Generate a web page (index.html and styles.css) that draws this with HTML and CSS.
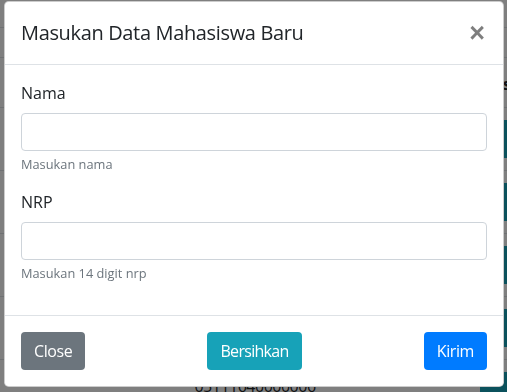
FILE: index.html
```html
<!DOCTYPE html>
<html>
	<head>
		<meta charset="utf-8">
		<title>Data Mahasiswa</title>
		<link rel="stylesheet" href="styles.css">
	</head>
	<body>
		<div class="page">
			<div class="row row-top"></div>
			<div class="row row-bar"></div>
			<div class="row row-head">
				<span class="cell cell-nrp"></span>
				<span class="cell cell-aksi">Aksi</span>
			</div>
			<div class="row"><span class="cell cell-nrp"></span><span class="cell cell-aksi"><span class="btn-bg"></span></span></div>
			<div class="row"><span class="cell cell-nrp"></span><span class="cell cell-aksi"><span class="btn-bg"></span></span></div>
			<div class="row"><span class="cell cell-nrp"></span><span class="cell cell-aksi"><span class="btn-bg"></span></span></div>
			<div class="row"><span class="cell cell-nrp"></span><span class="cell cell-aksi"><span class="btn-bg"></span></span></div>
			<div class="row row-last"><span class="cell cell-nrp">05111640000006</span><span class="cell cell-aksi"><span class="btn-bg"></span></span></div>
		</div>

		<div class="backdrop"></div>

		<div class="modal">
			<div class="modal-dialog">
				<div class="modal-header">
					<h5 class="modal-title">Masukan Data Mahasiswa Baru</h5>
					<button class="close" type="button">&times;</button>
				</div>
				<div class="modal-body">
					<div class="form-group">
						<label for="nama">Nama</label>
						<input class="form-control" id="nama" type="text">
						<small class="help">Masukan nama</small>
					</div>
					<div class="form-group">
						<label for="nrp">NRP</label>
						<input class="form-control" id="nrp" type="text">
						<small class="help">Masukan 14 digit nrp</small>
					</div>
				</div>
				<div class="modal-footer">
					<button class="btn btn-secondary" type="button">Close</button>
					<button class="btn btn-info" type="button">Bersihkan</button>
					<button class="btn btn-primary" type="button">Kirim</button>
				</div>
			</div>
		</div>
	</body>
</html>
```

FILE: styles.css
```css
* {
	margin: 0;
	padding: 0;
	box-sizing: border-box;
}

html, body {
	height: 100%;
	overflow: hidden;
}

body {
	font: 16px/1.5 "Open Sans", "Noto Sans", sans-serif;
	color: #212529;
	background: #fff;
}

/* table behind the modal */
.page {
	display: flex;
	flex-direction: column;
}

.row {
	display: flex;
	flex-shrink: 0;
	height: 63px;
	border-bottom: 1px solid #dee2e6;
}

.row-top {
	height: 28px;
}

.row-bar {
	height: 30px;
}

.row-head {
	height: 50px;
	font-weight: bold;
	align-items: flex-end;
	padding-bottom: 11px;
}

.cell {
	flex-shrink: 0;
}

.cell-nrp {
	width: 498px;
	text-align: center;
	padding-left: 14px;
	padding-top: 14px;
}

.row-head .cell-nrp {
	padding: 0;
}

.cell-aksi {
	padding-top: 12px;
}

.row-head .cell-aksi {
	margin-left: -16px;
	padding: 0;
}

.btn-bg {
	display: block;
	width: 60px;
	height: 38px;
	border-radius: 4px;
	background: #17a2b8;
}

.row-last .cell-nrp {
	width: 480px;
	padding-left: 30px;
	padding-right: 0;
	letter-spacing: -0.5px;
}

.backdrop {
	position: fixed;
	inset: 0;
	background: rgba(0, 0, 0, 0.5);
}

/* modal */
.modal {
	position: fixed;
	inset: 0;
	display: flex;
	align-items: flex-start;
	padding: 1px 0 0 4px;
}

.modal-dialog {
	width: 500px;
	background: #fff;
	border: 1px solid rgba(0, 0, 0, 0.2);
	border-radius: 4.8px;
	display: flex;
	flex-direction: column;
}

.modal-header {
	display: flex;
	align-items: flex-start;
	padding: 16px;
	border-bottom: 1px solid #dee2e6;
}

.modal-title {
	font-size: 20px;
	font-weight: 500;
	line-height: 30px;
	letter-spacing: -0.35px;
}

.close {
	margin: -16px -16px -16px auto;
	padding: 19px 18px 13px 16px;
	border: 0;
	background: transparent;
	font: bold 27px/24px "Liberation Sans", Arial, sans-serif;
	color: #000;
	opacity: 0.5;
}

.modal-body {
	padding: 16px;
}

.form-group {
	display: flex;
	flex-direction: column;
	margin-bottom: 16px;
}

.form-group label {
	margin-bottom: 8px;
}

.form-control {
	height: 38px;
	border: 1px solid #ced4da;
	border-radius: 4px;
	padding: 6px 12px;
	font: inherit;
}

.help {
	margin-top: 4px;
	font-size: 12.8px;
	line-height: 19.2px;
	color: #6c757d;
}

.modal-footer {
	display: flex;
	justify-content: space-between;
	align-items: center;
	padding: 12px;
	border-top: 1px solid #dee2e6;
}

.btn {
	margin: 4px;
	height: 38px;
	padding: 0 12px;
	border: 1px solid transparent;
	border-radius: 4px;
	color: #fff;
	font: 16px/36px "Open Sans", "Noto Sans", sans-serif;
	letter-spacing: -0.4px;
}

.btn-secondary {
	background: #6c757d;
}

.btn-info {
	background: #17a2b8;
	padding: 0 12px;
	letter-spacing: -0.7px;
}

.btn-primary {
	background: #007bff;
}
```
